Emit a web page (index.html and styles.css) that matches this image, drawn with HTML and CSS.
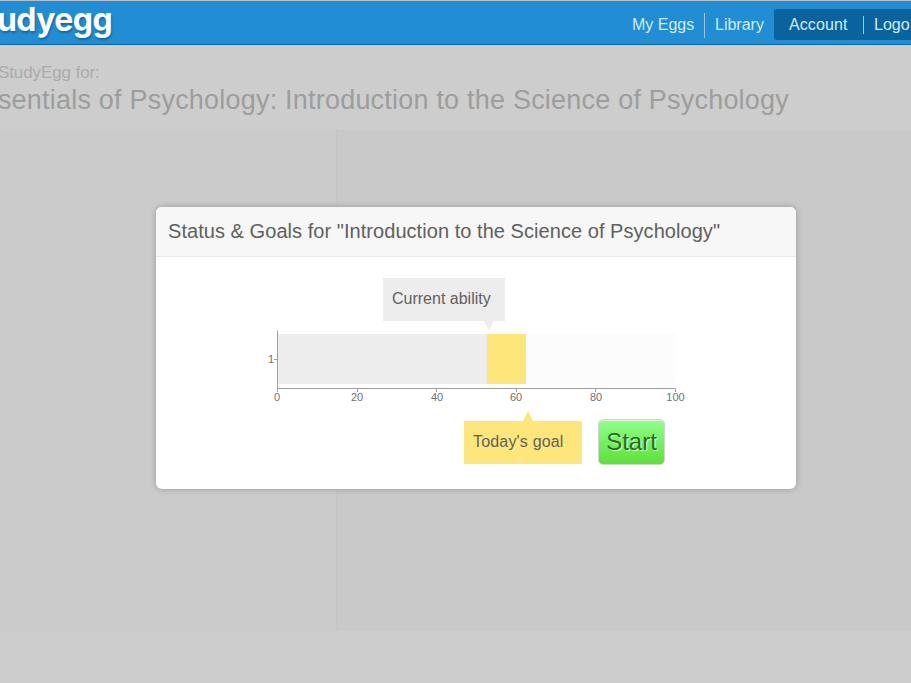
FILE: index.html
```html
<!DOCTYPE html>
<html lang="en">
<head>
<meta charset="utf-8">
<title>StudyEgg</title>
<link rel="stylesheet" href="styles.css">
</head>
<body>
<header class="topbar">
  <div class="logo">udyegg</div>
  <nav class="nav">
    <a class="link">My Eggs</a>
    <a class="link library">Library</a>
    <div class="account">
      <a>Account</a>
      <a class="logout">Logo</a>
    </div>
  </nav>
</header>
<section class="heading">
  <p class="kicker">StudyEgg for:</p>
  <h1>sentials of Psychology: Introduction to the Science of Psychology</h1>
</section>
<main class="panels">
  <div class="side"></div>
  <div class="content"></div>
</main>
<div class="modal">
  <h2>Status &amp; Goals for "Introduction to the Science of Psychology"</h2>
  <div class="modal-body">
    <div class="callout current">Current ability</div>
    <svg class="chart" width="440" height="76" viewBox="0 0 440 76">
      <rect x="18" y="4" width="398" height="50" fill="#fcfcfc"/>
      <rect x="18" y="4" width="209" height="50" fill="#ededed"/>
      <rect x="227" y="4" width="39" height="50" fill="#ffe67a"/>
      <path d="M17.500 .5V58.5H415.5V62M17.5 58V62M97.5 58V62M176.5 58V62M256.5 58V62M335.5 58V62M14 29.5H17" fill="none" stroke="#a0a0a0"/>
      <g class="ticks">
        <text x="11" y="33">1</text>
        <text x="17" y="71">0</text>
        <text x="97" y="71">20</text>
        <text x="177" y="71">40</text>
        <text x="256" y="71">60</text>
        <text x="336" y="71">80</text>
        <text x="415.500" y="71">100</text>
      </g>
    </svg>
    <div class="actions">
      <div class="callout goal">Today's goal</div>
      <button class="start">Start</button>
    </div>
  </div>
</div>
</body>
</html>
```
FILE: styles.css
```css
* { box-sizing: border-box; }
body {
  margin: 0;
  height: 683px;
  overflow: hidden;
  background: #cdcdcd;
  font-family: "Liberation Sans", Arial, sans-serif;
  color: #606060;
}
.topbar {
  display: flex;
  justify-content: space-between;
  height: 45px;
  border-top: 1px solid #b8bfc4;
  border-bottom: 1px solid #0766ab;
  background: #218dd4;
}
.logo {
  display: flex;
  justify-content: flex-end;
  width: 112px;
  font: 700 32px/38px Inter, sans-serif;
  letter-spacing: -.6px;
  color: #fff;
  text-shadow: 1px 2px 2px rgba(0, 50, 90, .4);
}
.nav {
  display: flex;
  width: 279px;
  padding-top: 8px;
  font-size: 16px;
  line-height: 31px;
  color: #d2ecfb;
  white-space: nowrap;
}
.nav .link { flex: none; width: 72px; }
.nav .library {
  width: 70px;
  height: 25px;
  margin-top: 4px;
  padding-left: 10px;
  border-left: 1px solid #a6c4d8;
  line-height: 23px;
}
.account {
  display: flex;
  flex: none;
  width: 160px;
  height: 31px;
  padding-left: 15px;
  border-radius: 3px;
  background: #0a639c;
}
.account a:first-child { width: 74px; letter-spacing: .1px; }
.logout {
  height: 18px;
  margin-top: 7px;
  padding-left: 10px;
  border-left: 1px solid #b5c2ca;
  line-height: 17px;
}
.heading { height: 85px; padding-top: 18px; }
.kicker { margin: 0 0 0 -2px; font-size: 17px; line-height: 20px; letter-spacing: -.1px; color: #ababab; }
h1 {
  display: flex;
  justify-content: flex-end;
  width: 789px;
  margin: 0;
  font-size: 27px;
  font-weight: 400;
  line-height: 34px;
  letter-spacing: .21px;
  color: #9d9d9d;
  white-space: nowrap;
}
.panels { display: flex; height: 501px; }
.side { width: 337px; border-right: 1px solid #c5c5c5; background: #cbcbcb; }
.content { flex: 1; background: #c9c9c9; }
.modal {
  position: absolute;
  left: 156px;
  top: 207px;
  width: 640px;
  height: 282px;
  overflow: hidden;
  border-radius: 6px;
  background: #fff;
  box-shadow: 0 0 6px rgba(0, 0, 0, .25);
}
h2 {
  height: 50px;
  margin: 0;
  padding-left: 12px;
  border-bottom: 1px solid #e8e8e8;
  background: #f7f7f7;
  font-size: 20px;
  font-weight: 400;
  line-height: 48px;
  letter-spacing: .05px;
  white-space: nowrap;
}
.modal-body { padding-top: 21px; }
.callout {
  position: relative;
  height: 43px;
  padding-left: 9px;
  font-size: 16px;
  line-height: 41px;
}
.callout::after {
  content: "";
  position: absolute;
  border: 5px solid transparent;
}
.current { width: 122px; margin-left: 227px; background: #ededed; }
.current::after { left: 101px; top: 43px; border-top: 9px solid #ededed; border-bottom: 0; }
.chart { display: block; margin: 9px 0 0 104px; }
.ticks { font-size: 11px; fill: #707070; text-anchor: middle; }
.actions { display: flex; gap: 16px; margin: 13px 0 0 308px; }
.goal { width: 118px; margin-top: 2px; background: #ffe67a; letter-spacing: .18px; }
.goal::after { left: 59px; top: -10px; border-bottom: 10px solid #ffe67a; border-top: 0; }
.start {
  width: 67px;
  height: 46px;
  padding: 0;
  border: 1px solid #d2d2d2;
  border-radius: 5px;
  background: linear-gradient(#8fff8c, #5ce236);
  box-shadow: inset 0 1px #e4f5e4;
  font: 24px/44px "Liberation Sans", Arial, sans-serif;
  color: #237012;
  text-shadow: 1px 1px #e0ffe0;
}
```
